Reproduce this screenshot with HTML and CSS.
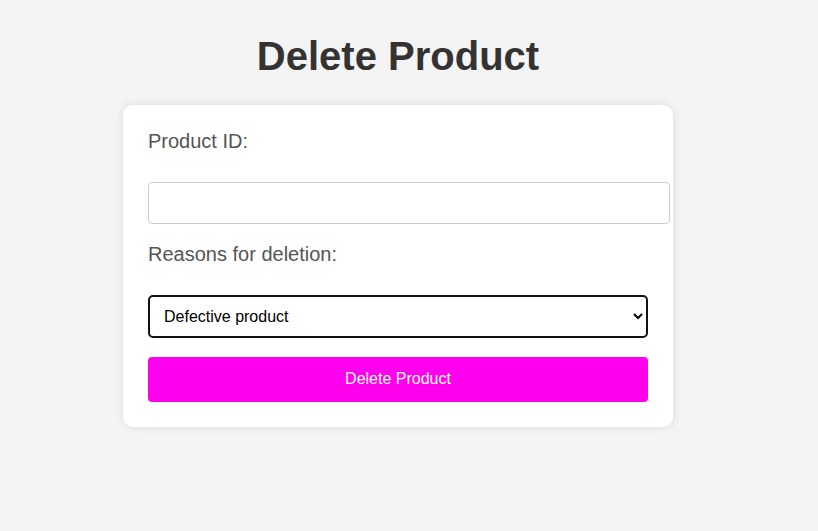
FILE: index.html
```html
<!DOCTYPE html>
<html lang="en">
<head>
<meta charset="utf-8">
<title>Delete Product</title>
<link rel="stylesheet" href="styles.css">
</head>
<body>
<div class="page">
  <h1 class="title">Delete Product</h1>
  <form class="card">
    <label class="label" for="pid">Product ID:</label>
    <input class="input" id="pid" type="text">
    <label class="label" for="reason">Reasons for deletion:</label>
    <select class="select" id="reason">
      <option>Defective product</option>
      <option>Out of stock</option>
      <option>Discontinued</option>
    </select>
    <button class="btn" type="button">Delete Product</button>
  </form>
</div>
</body>
</html>
```

FILE: styles.css
```css
html, body {
  margin: 0;
  padding: 0;
}
body {
  background: #f4f4f4;
  font-family: "Liberation Sans", Arial, sans-serif;
  height: 531px;
}
.page {
  width: 796px;
  display: flex;
  flex-direction: column;
  align-items: center;
}
.title {
  margin: 33px 0 26px;
  font-size: 40px;
  line-height: 46px;
  font-weight: bold;
  color: #333;
}
.card {
  width: 500px;
  background: #fff;
  border-radius: 10px;
  padding: 25px 25px 25px;
  box-shadow: 0 0 10px rgba(0, 0, 0, 0.1);
  display: flex;
  flex-direction: column;
  align-items: flex-start;
}
.label {
  display: block;
  font-size: 20px;
  line-height: 23px;
  color: #555;
  margin-bottom: 29px;
}
.input {
  width: 500px;
  height: 20px;
  padding: 10px;
  border: 1px solid #ccc;
  border-radius: 4px;
  font-size: 16px;
  font-family: "Liberation Sans", Arial, sans-serif;
  margin: 0 0 19px;
  outline: none;
}
.select {
  box-sizing: border-box;
  width: 500px;
  height: 43px;
  padding: 0 10px;
  border: 2px solid #111;
  border-radius: 5px;
  font-size: 16px;
  font-family: "Liberation Sans", Arial, sans-serif;
  color: #000;
  background: #fff;
  margin: 0 0 19px;
}
.btn {
  width: 500px;
  height: 45px;
  padding: 0 0 2px;
  border: none;
  border-radius: 4px;
  background: #ff00ee;
  color: #fff;
  font-size: 16px;
  font-family: "Liberation Sans", Arial, sans-serif;
  cursor: pointer;
}
```
